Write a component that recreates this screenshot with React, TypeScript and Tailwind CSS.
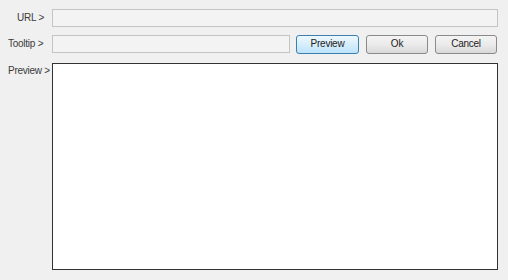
export default function App() {
  const font = { fontFamily: '"Liberation Sans", Arial, sans-serif' };
  return (
    <div
      className="w-[508px] h-[280px] bg-[#f0f0f0] text-[10px] tracking-[-0.25px] text-[#3a3a3a] flex flex-col pt-[9px]"
      style={font}
    >
      <div className="flex items-center h-[18px]">
        <div className="w-[52px] pr-[8px] text-right leading-none whitespace-nowrap">URL &gt;</div>
        <div className="w-[446px] h-[18px] border border-[#c4c4c4] bg-[#f3f3f3]" />
      </div>
      <div className="flex items-center h-[18px] mt-[8px]">
        <div className="w-[52px] pl-[8px] leading-none whitespace-nowrap">Tooltip &gt;</div>
        <div className="w-[238px] h-[18px] border border-[#c4c4c4] bg-[#f3f3f3]" />
        <button className="ml-[6px] w-[63px] h-[19px] rounded-[3px] border border-[#3c7fb1] bg-gradient-to-b from-[#eef8fe] via-[#d6eefc] to-[#bde3fa] leading-none text-[#222]">
          Preview
        </button>
        <button className="ml-[7px] w-[62px] h-[19px] rounded-[3px] border border-[#8a8a8a] bg-gradient-to-b from-[#f4f4f4] via-[#ebebeb] to-[#d9d9d9] leading-none text-[#222]">
          Ok
        </button>
        <button className="ml-[7px] w-[62px] h-[19px] rounded-[3px] border border-[#8a8a8a] bg-gradient-to-b from-[#f4f4f4] via-[#ebebeb] to-[#d9d9d9] leading-none text-[#222]">
          Cancel
        </button>
      </div>
      <div className="flex mt-[10px]">
        <div className="w-[52px] pl-[8px] pt-[3px] leading-none whitespace-nowrap">Preview &gt;</div>
        <div className="w-[446px] h-[207px] border border-[#333] bg-white" />
      </div>
    </div>
  );
}
